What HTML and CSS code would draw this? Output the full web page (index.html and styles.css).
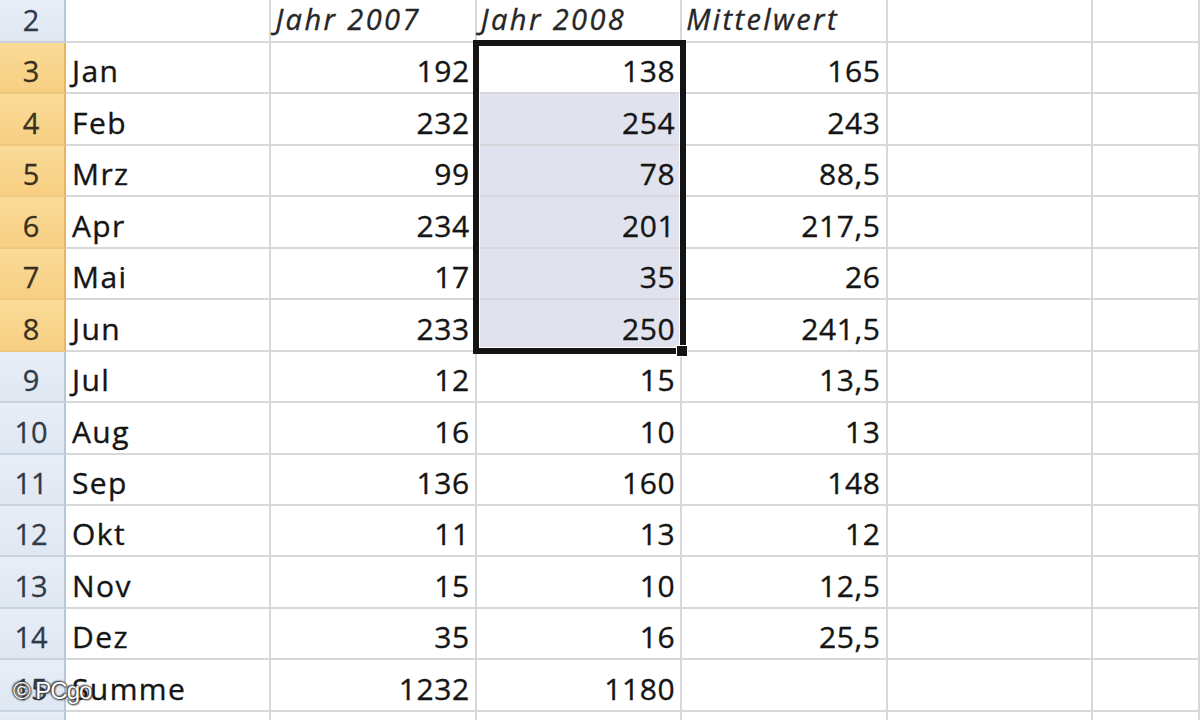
FILE: index.html
```html
<!DOCTYPE html>
<html lang="de">
<head>
<meta charset="utf-8">
<title>Mittelwert</title>
<link rel="stylesheet" href="styles.css">
</head>
<body>
<div class="page">
  <div class="sheet">
    <div class="rh">2</div><div class="c"></div><div class="c hd">Jahr 2007</div><div class="c hd">Jahr 2008</div><div class="c hd">Mittelwert</div><div class="c"></div><div class="c"></div>

    <div class="rh sel">3</div><div class="c t">Jan</div><div class="c n">192</div><div class="c n">138</div><div class="c n">165</div><div class="c"></div><div class="c"></div>
    <div class="rh sel">4</div><div class="c t">Feb</div><div class="c n">232</div><div class="c n hl">254</div><div class="c n">243</div><div class="c"></div><div class="c"></div>
    <div class="rh sel">5</div><div class="c t">Mrz</div><div class="c n">99</div><div class="c n hl">78</div><div class="c n">88,5</div><div class="c"></div><div class="c"></div>
    <div class="rh sel">6</div><div class="c t">Apr</div><div class="c n">234</div><div class="c n hl">201</div><div class="c n">217,5</div><div class="c"></div><div class="c"></div>
    <div class="rh sel">7</div><div class="c t">Mai</div><div class="c n">17</div><div class="c n hl">35</div><div class="c n">26</div><div class="c"></div><div class="c"></div>
    <div class="rh sel">8</div><div class="c t">Jun</div><div class="c n">233</div><div class="c n hl">250</div><div class="c n">241,5</div><div class="c"></div><div class="c"></div>
    <div class="rh">9</div><div class="c t">Jul</div><div class="c n">12</div><div class="c n">15</div><div class="c n">13,5</div><div class="c"></div><div class="c"></div>
    <div class="rh">10</div><div class="c t">Aug</div><div class="c n">16</div><div class="c n">10</div><div class="c n">13</div><div class="c"></div><div class="c"></div>
    <div class="rh">11</div><div class="c t">Sep</div><div class="c n">136</div><div class="c n">160</div><div class="c n">148</div><div class="c"></div><div class="c"></div>
    <div class="rh">12</div><div class="c t">Okt</div><div class="c n">11</div><div class="c n">13</div><div class="c n">12</div><div class="c"></div><div class="c"></div>
    <div class="rh">13</div><div class="c t">Nov</div><div class="c n">15</div><div class="c n">10</div><div class="c n">12,5</div><div class="c"></div><div class="c"></div>
    <div class="rh">14</div><div class="c t">Dez</div><div class="c n">35</div><div class="c n">16</div><div class="c n">25,5</div><div class="c"></div><div class="c"></div>
    <div class="rh">15</div><div class="c t">Summe</div><div class="c n">1232</div><div class="c n">1180</div><div class="c n"></div><div class="c"></div><div class="c"></div>
    <div class="rh"></div><div class="c"></div><div class="c"></div><div class="c"></div><div class="c"></div><div class="c"></div><div class="c"></div>
  </div>

  <div class="selection"></div>
  <div class="handle"></div>
  <div class="watermark">© PCgo</div>
</div>
</body>
</html>
```

FILE: styles.css
```css
* { box-sizing: border-box; }

html, body {
  margin: 0;
  padding: 0;
  width: 1200px;
  height: 720px;
  overflow: hidden;
  background: #ffffff;
}

.page {
  position: relative;
  width: 1200px;
  height: 720px;
  overflow: hidden;
  font-family: "Open Sans", "Liberation Sans", sans-serif;
  font-size: 30px;
  color: #151515;
}

.sheet {
  display: grid;
  grid-template-columns: 66px repeat(5, 205.4px) 1fr;
  grid-template-rows: 43px repeat(13, 51.45px) 20px;
}

.c {
  display: flex;
  align-items: flex-end;
  padding: 0 5px 7px 5px;
  line-height: 29px;
  white-space: nowrap;
  border-right: 2px solid #d6d8db;
  border-bottom: 2px solid #d6d8db;
  background: #ffffff;
  -webkit-text-stroke: 0.35px currentColor;
}

.n { justify-content: flex-end; letter-spacing: 0.6px; }

.t { letter-spacing: 1.4px; padding-left: 6px; }

.hd {
  font-style: italic;
  font-size: 29px;
  letter-spacing: 2.4px;
  color: #262626;
  padding-left: 4px;
  padding-bottom: 8px;
}

.hl { background: #e0e3ee; }

.rh {
  display: flex;
  align-items: flex-end;
  justify-content: center;
  padding: 0 2px 7px 0;
  line-height: 29px;
  font-size: 29px;
  color: #2f3a48;
  background: linear-gradient(#e8eef7, #dfe7f2);
  border-right: 2px solid #b7c6d8;
  border-bottom: 2px solid #c9d3df;
  -webkit-text-stroke: 0.3px currentColor;
}

.rh.sel {
  color: #3a3020;
  background: linear-gradient(#fadb98, #f7cf82);
  border-right: 2px solid #e9b55c;
  border-bottom: 2px solid #efc880;
}

.selection {
  position: absolute;
  left: 473px;
  top: 40px;
  width: 213px;
  height: 314px;
  border: 6px solid #141414;
  box-shadow: inset 0 0 0 1px #ffffff;
  pointer-events: none;
}

.handle {
  position: absolute;
  left: 676px;
  top: 345px;
  width: 12px;
  height: 12px;
  background: #141414;
  border: 1px solid #ffffff;
}

.watermark {
  position: absolute;
  left: 13px;
  top: 677px;
  font-family: "Liberation Sans", Arial, sans-serif;
  font-size: 24px;
  line-height: 28px;
  color: #ffffff;
  letter-spacing: -1px;
  text-shadow: 0 0 1px #222, 0 0 2px #333, 1px 1px 2px #333, -1px -1px 2px #333;
}
```
